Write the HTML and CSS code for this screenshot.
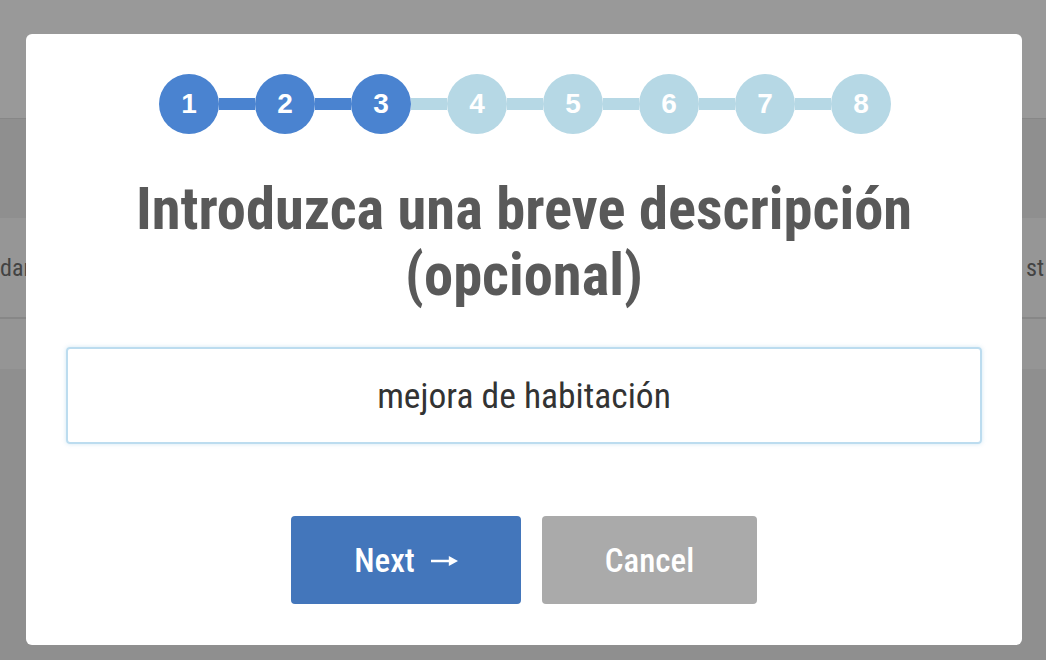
FILE: index.html
```html
<!DOCTYPE html>
<html lang="es">
<head>
<meta charset="utf-8">
<title>Descripción</title>
<link rel="stylesheet" href="styles.css">
</head>
<body>
<div class="page">
  <div class="page-header"></div>
  <div class="page-row row-a"></div>
  <div class="page-row row-b"><span class="cell-left">dar</span><span class="cell-right">st</span></div>
  <div class="page-row row-c"></div>
</div>
<div class="overlay">
  <div class="modal">
    <ol class="steps">
      <li class="step done">1</li>
      <li class="bar done"></li>
      <li class="step done">2</li>
      <li class="bar done"></li>
      <li class="step done">3</li>
      <li class="bar"></li>
      <li class="step">4</li>
      <li class="bar"></li>
      <li class="step">5</li>
      <li class="bar"></li>
      <li class="step">6</li>
      <li class="bar"></li>
      <li class="step">7</li>
      <li class="bar"></li>
      <li class="step">8</li>
    </ol>
    <h2 class="title">Introduzca una breve descripción (opcional)</h2>
    <div class="field">mejora de habitación</div>
    <div class="actions">
      <button class="btn btn-next">Next<svg class="arrow" width="27" height="14" viewBox="0 0 28 14" aria-hidden="true"><rect x="0" y="5.7" width="20" height="2.6" fill="#ffffff"/><path d="M18.5 1.8 L28 7 L18.5 12.2 Z" fill="#ffffff"/></svg></button>
      <button class="btn btn-cancel">Cancel</button>
    </div>
  </div>
</div>
</body>
</html>
```
FILE: styles.css
```css
html, body {
  margin: 0;
  padding: 0;
  height: 100%;
  overflow: hidden;
}
body {
  background: #eeeeee;
  font-family: "Roboto Condensed", Roboto, "Liberation Sans", sans-serif;
  font-stretch: condensed;
}
.page {
  display: flex;
  flex-direction: column;
}
.page-header {
  height: 118px;
  background: #ffffff;
  border-bottom: 1px solid #e2e2e2;
}
.page-row {
  box-sizing: border-box;
}
.row-a {
  height: 99px;
  background: #eeeeee;
}
.row-b {
  height: 101px;
  background: #fbfbfb;
  border-bottom: 2px solid #e2e2e2;
  display: flex;
  justify-content: space-between;
  align-items: center;
  font-size: 24px;
  color: #717171;
  overflow: hidden;
}
.cell-left {
  margin-left: 0;
}
.cell-right {
  margin-right: 2px;
}
.row-c {
  height: 50px;
  background: #f9f9f9;
}
.overlay {
  position: fixed;
  inset: 0;
  background: rgba(0, 0, 0, 0.4);
  padding: 34px 24px 0 26px;
  box-sizing: border-box;
}
.modal {
  width: 996px;
  height: 611px;
  box-sizing: border-box;
  background: #ffffff;
  border-radius: 6px;
  padding: 40px 40px 0;
  display: flex;
  flex-direction: column;
  align-items: center;
}
.steps {
  list-style: none;
  margin: 0 0 0 2px;
  padding: 0;
  display: flex;
  align-items: center;
}
.step {
  width: 60px;
  height: 60px;
  border-radius: 50%;
  background: #b6d8e5;
  color: #ffffff;
  font-family: "Liberation Sans", Arial, sans-serif;
  font-stretch: normal;
  font-weight: bold;
  font-size: 28px;
  display: flex;
  align-items: center;
  justify-content: center;
}
.step.done {
  background: #4a83d0;
}
.bar {
  width: 36px;
  height: 12px;
  background: #b6d8e5;
}
.bar.done {
  background: #4a83d0;
}
.title {
  margin: 42px 0 0;
  width: 820px;
  text-align: center;
  font-size: 58.5px;
  line-height: 66px;
  font-weight: 700;
  color: #595959;
}
.field {
  margin-top: 39px;
  width: 916px;
  height: 97px;
  box-sizing: border-box;
  border: 2px solid #bcdcef;
  border-radius: 4px;
  box-shadow: 0 0 4px rgba(120, 180, 220, 0.35);
  display: flex;
  align-items: center;
  justify-content: center;
  font-size: 35.5px;
  color: #333333;
}
.actions {
  margin-top: 72px;
  display: flex;
  gap: 21px;
}
.btn {
  height: 88px;
  border: 0;
  border-radius: 4px;
  padding: 0;
  display: flex;
  align-items: center;
  justify-content: center;
  font-family: inherit;
  font-stretch: condensed;
  font-size: 33px;
  font-weight: 500;
  color: #ffffff;
  white-space: nowrap;
}
.arrow {
  margin-left: 16px;
  margin-top: 1px;
}
.btn-next {
  background: #4376bb;
  width: 230px;
}
.btn-cancel {
  background: #aaaaaa;
  width: 215px;
}
```
